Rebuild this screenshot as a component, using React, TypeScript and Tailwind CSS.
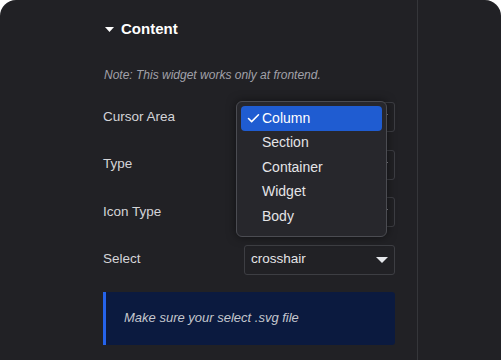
import { Check } from "lucide-react";

const font = { fontFamily: '"Liberation Sans", Arial, sans-serif' };

function Caret() {
  return (
    <svg width="12" height="6" viewBox="0 0 12 6" className="shrink-0">
      <path d="M0 0h12L6 6z" fill="#e5e7eb" />
    </svg>
  );
}

function SelectBox({ value }: { value?: string }) {
  return (
    <div className="w-[151px] h-[30px] rounded-[3px] border border-[#3d3e43] flex items-center pl-[6px] pr-[6px] justify-between">
      <span className="text-[13.5px] text-[#e4e4e7]">{value}</span>
      <Caret />
    </div>
  );
}

function Row({ label, value, children }: { label: string; value?: string; children?: React.ReactNode }) {
  return (
    <div className="relative h-[30px] flex items-center justify-between">
      <span className="text-[13.5px] text-[#d4d4d8]">{label}</span>
      <SelectBox value={value} />
      {children}
    </div>
  );
}

const options = ["Column", "Section", "Container", "Widget", "Body"];

function Popup() {
  return (
    <div className="absolute left-[133px] top-[-1px] w-[151px] rounded-[6px] border border-[#4b4c52] bg-[#27272c] shadow-[0_0_10px_rgba(0,0,0,0.5)] px-[4px] pt-[4px] pb-[7px] z-10">
      {options.map((o, i) => (
        <div
          key={o}
          className={
            "h-[24.5px] flex items-center rounded-[4px] text-[14px] " +
            (i === 0 ? "bg-[#1f5cd1] text-white" : "text-[#e4e4e7]")
          }
        >
          <span className="w-[21px] flex justify-center pl-[3px]">
            {i === 0 && <Check size={15} strokeWidth={2.5} />}
          </span>
          <span>{o}</span>
        </div>
      ))}
    </div>
  );
}

export default function App() {
  return (
    <div className="w-[501px] h-[360px] bg-white" style={font}>
      <div className="w-full h-full bg-[#212125] rounded-t-[16px] flex overflow-hidden">
        <div className="w-[418px] h-full border-r border-[#35363a] pl-[103px] pr-[22px] pt-[19px]">
          <div className="h-[20px] flex items-center gap-[7px] pl-[2px]">
            <svg width="9" height="5" viewBox="0 0 9 5">
              <path d="M0 0h9L4.5 5z" fill="#fff" />
            </svg>
            <span className="text-[15px] font-bold text-white">Content</span>
          </div>
          <p className="mt-[28px] h-[16px] leading-[16px] text-[12px] italic text-[#a1a1aa] pl-[1px]">
            Note: This widget works only at frontend.
          </p>
          <div className="mt-[19px] flex flex-col gap-[17.5px]">
            <Row label="Cursor Area">
              <Popup />
            </Row>
            <Row label="Type" />
            <Row label="Icon Type" />
            <Row label="Select" value="crosshair" />
          </div>
          <div className="mt-[17px] h-[53px] bg-[#0b1a3f] border-l-[3px] border-[#2563eb] rounded-r-[3px] flex items-center pl-[18px]">
            <span className="text-[13px] italic text-[#c4c7ce]">Make sure your select .svg file</span>
          </div>
        </div>
        <div className="flex-1" />
      </div>
    </div>
  );
}
